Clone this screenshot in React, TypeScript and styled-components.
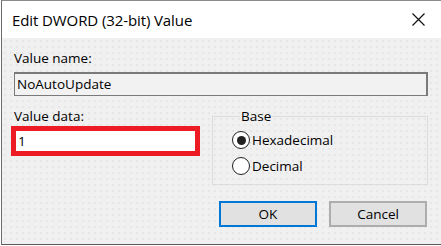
import React from "react";
import styled, { createGlobalStyle } from "styled-components";

const GlobalStyle = createGlobalStyle`
  html, body {
    margin: 0;
    padding: 0;
    background: #ffffff;
  }
  body {
    font-family: "Open Sans", "Noto Sans", sans-serif;
    color: #000000;
  }
`;

const Window = styled.div`
  box-sizing: border-box;
  margin-left: 1px;
  width: 440px;
  height: 245px;
  display: flex;
  flex-direction: column;
  border-top: 1px solid #8a8a8a;
  border-left: 1px solid #6d6d6d;
  border-bottom: 1px solid #5a5a5a;
`;

const TitleBar = styled.div`
  height: 37px;
  flex-shrink: 0;
  display: flex;
  align-items: center;
  justify-content: space-between;
  background: #ffffff;
  padding-left: 10px;
`;

const Title = styled.div`
  font-size: 15px;
  letter-spacing: -0.1px;
`;

const CloseButton = styled.div`
  width: 46px;
  height: 37px;
  display: flex;
  align-items: center;
  justify-content: center;
`;

const Body = styled.div`
  flex: 1;
  display: flex;
  flex-direction: column;
  padding: 12px 13px 0 12px;
  background-color: #f0f0f0;
  background-image: radial-gradient(circle, #e3e3e3 0.6px, transparent 1px);
  background-size: 6px 6px;
  font-size: 13.5px;
`;

const Label = styled.div`
  line-height: 16px;
  height: 16px;
`;

const ReadOnlyField = styled.div`
  box-sizing: border-box;
  margin-top: 6px;
  width: 414px;
  height: 24px;
  display: flex;
  align-items: center;
  padding: 0 0 2px 2px;
  background: #f2f2f2;
  border: 1px solid #7a7a7a;
  border-top-width: 2px;
  border-right-width: 2px;
`;

const Row = styled.div`
  margin-top: 12px;
  display: grid;
  grid-template-columns: 198px 216px;
`;

const Column = styled.div`
  display: flex;
  flex-direction: column;
`;

const HighlightedField = styled.div`
  box-sizing: border-box;
  margin-top: 2px;
  margin-left: -3px;
  width: 189px;
  height: 30px;
  display: flex;
  align-items: center;
  padding-left: 2px;
  padding-bottom: 1px;
  background: #ffffff;
  border: 5px solid #ed1c24;
`;

const GroupBox = styled.fieldset`
  margin: 0;
  min-width: 0;
  height: 77px;
  box-sizing: border-box;
  border: 1px solid #dcdcdc;
  padding: 6px 0 0 19px;
  display: flex;
  flex-direction: column;
  gap: 6px;
`;

const Legend = styled.legend`
  margin-left: 8px;
  padding: 0 1px;
  line-height: 16px;
  font-size: 13.5px;
`;

const RadioRow = styled.div`
  display: flex;
  align-items: center;
  height: 20px;
  gap: 2px;
`;

const RadioCircle = styled.span<{ $checked?: boolean }>`
  box-sizing: border-box;
  width: 18px;
  height: 18px;
  border-radius: 50%;
  border: 1.3px solid #222222;
  background: #ffffff;
  display: flex;
  align-items: center;
  justify-content: center;

  &::after {
    content: "";
    width: 9px;
    height: 9px;
    border-radius: 50%;
    background: #222222;
    display: ${({ $checked }) => ($checked ? "block" : "none")};
  }
`;

const ButtonRow = styled.div`
  margin-top: 16px;
  margin-right: 1px;
  display: flex;
  justify-content: flex-end;
  gap: 12px;
`;

const Button = styled.div<{ $default?: boolean }>`
  box-sizing: border-box;
  width: 98px;
  height: 26px;
  display: flex;
  align-items: center;
  justify-content: center;
  padding-bottom: 1px;
  background: #e1e1e1;
  border: 2px solid ${({ $default }) => ($default ? "#0078d7" : "#adadad")};
`;

const CloseIcon = () => (
  <svg width="13" height="13" viewBox="0 0 13 13">
    <path d="M0.5 0.5 L12.5 12.5 M12.5 0.5 L0.5 12.5" stroke="#111" strokeWidth="1.2" fill="none" />
  </svg>
);

export default function App() {
  return (
    <>
      <GlobalStyle />
      <Window>
        <TitleBar>
          <Title>Edit DWORD (32-bit) Value</Title>
          <CloseButton>
            <CloseIcon />
          </CloseButton>
        </TitleBar>
        <Body>
          <Label>Value name:</Label>
          <ReadOnlyField>NoAutoUpdate</ReadOnlyField>
          <Row>
            <Column>
              <Label>Value data:</Label>
              <HighlightedField>1</HighlightedField>
            </Column>
            <GroupBox>
              <Legend>Base</Legend>
              <RadioRow>
                <RadioCircle $checked />
                Hexadecimal
              </RadioRow>
              <RadioRow>
                <RadioCircle />
                Decimal
              </RadioRow>
            </GroupBox>
          </Row>
          <ButtonRow>
            <Button $default>OK</Button>
            <Button>Cancel</Button>
          </ButtonRow>
        </Body>
      </Window>
    </>
  );
}
